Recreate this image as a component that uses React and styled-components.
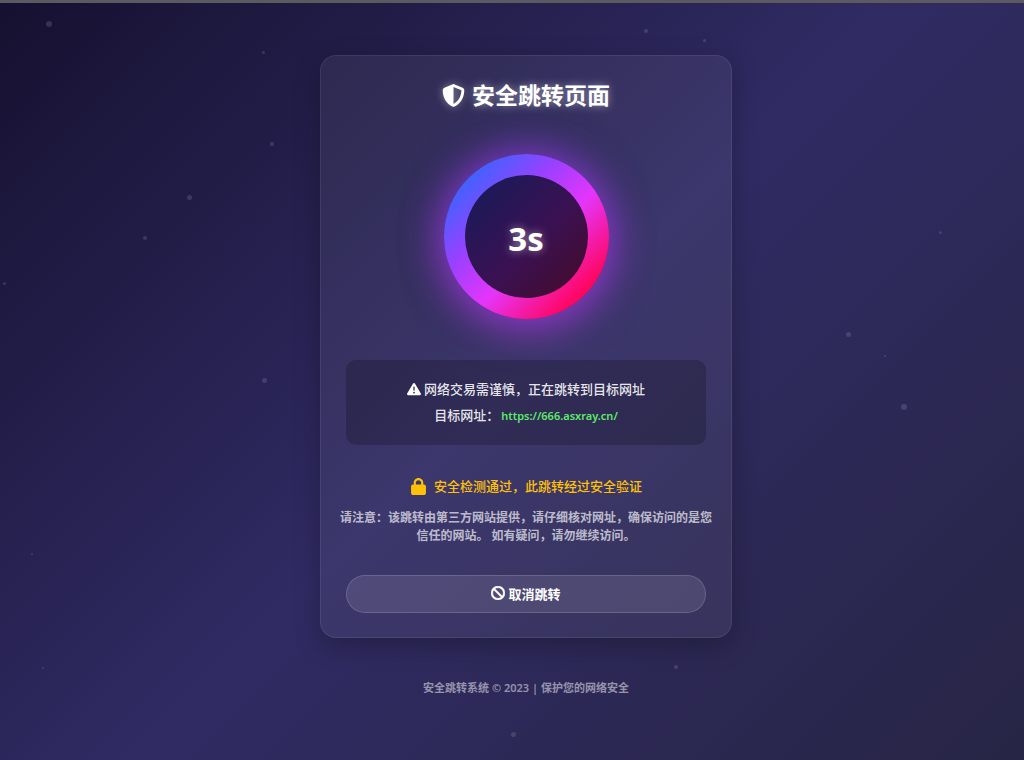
import React, {useState, useEffect} from 'react';
import styled, {createGlobalStyle} from 'styled-components';
import {FaShieldHalved, FaTriangleExclamation, FaLock, FaBan} from 'react-icons/fa6';

const GlobalStyle = createGlobalStyle`
    * {
        box-sizing: border-box;
    }
    body {
        margin: 0;
        color: #fff;
        font-family: "Noto Sans", "Noto Sans CJK SC", sans-serif;
        font-size: 13px;
    }
    h1, p {
        margin: 0;
    }
`

const Page = styled.div`
    position: relative;
    min-height: 100vh;
    padding: 52px 0 52px 28px;
    overflow: hidden;
    display: flex;
    flex-direction: column;
    align-items: center;
    border-top: 3px solid #5a5a60;
    background: linear-gradient(135deg, #161130 0%, #302b63 50%, #272545 100%);
`

const Particle = styled.span`
    position: absolute;
    left: ${({$x}) => $x}%;
    top: ${({$y}) => $y}%;
    width: ${({$size}) => $size}px;
    height: ${({$size}) => $size}px;
    border-radius: 50%;
    background: rgba(255, 255, 255, 0.13);
`

const Card = styled.main`
    position: relative;
    width: 100%;
    max-width: 412px;
    padding: 24px 16px;
    border: 1px solid rgba(255, 255, 255, 0.08);
    border-radius: 16px;
    background: rgba(255, 255, 255, 0.06);
    box-shadow: 0 8px 26px rgba(0, 0, 0, 0.25);
    text-align: center;
`

const Title = styled.h1`
    display: flex;
    align-items: center;
    justify-content: center;
    gap: 7px;
    font-size: 23px;
    line-height: 30px;
    font-weight: 700;
    text-shadow: 0 0 8px rgba(255, 255, 255, 0.5);
    svg {
        filter: drop-shadow(0 0 4px rgba(255, 255, 255, 0.4));
    }
`

const Ring = styled.div`
    display: flex;
    width: 165px;
    height: 165px;
    margin: 44px auto 41px;
    padding: 21px;
    border-radius: 50%;
    background: linear-gradient(135deg, #4361ff 15%, #9a40ff 36%, #e535fa 57%, #ff0660 84%);
    box-shadow: 0 -4px 42px rgba(140, 60, 255, 0.5), 0 8px 42px rgba(229, 53, 250, 0.5);
`

const Counter = styled.div`
    flex: 1;
    display: flex;
    align-items: center;
    justify-content: center;
    padding-top: 3px;
    border-radius: 50%;
    background: linear-gradient(135deg, #1b1a58 10%, #3a1152 55%, #430c30 90%);
    font-size: 33px;
    font-weight: 700;
    text-shadow: 0 0 8px rgba(255, 255, 255, 0.5);
`

const Info = styled.section`
    margin: 0 9px 29px;
    padding: 16px;
    border-radius: 10px;
    background: rgba(0, 0, 0, 0.2);
    color: rgba(255, 255, 255, 0.9);
    font-weight: 500;
    line-height: 26px;
    svg {
        margin-right: 3px;
        vertical-align: -2px;
        color: #fff;
    }
`

const Target = styled.a`
    margin-left: 2px;
    color: #5eea6a;
    font-size: 11px;
    font-weight: 600;
    text-decoration: none;
`

const Passed = styled.p`
    display: flex;
    align-items: center;
    justify-content: center;
    gap: 7px;
    margin-bottom: 11px;
    color: #ffc107;
    font-weight: 500;
    line-height: 24px;
`

const Notice = styled.p`
    margin-bottom: 30px;
    color: rgba(255, 255, 255, 0.68);
    font-size: 12px;
    font-weight: 600;
    line-height: 18px;
`

const Cancel = styled.button`
    display: flex;
    align-items: center;
    justify-content: center;
    gap: 3px;
    width: calc(100% - 18px);
    height: 38px;
    margin: 0 9px;
    padding: 0 0 2px;
    border: 1px solid rgba(255, 255, 255, 0.15);
    border-radius: 19px;
    background: rgba(255, 255, 255, 0.1);
    color: #fff;
    font-family: inherit;
    font-size: 13px;
    font-weight: 700;
    cursor: pointer;
`

const Footer = styled.footer`
    margin-top: 41px;
    color: rgba(255, 255, 255, 0.5);
    font-size: 11px;
    font-weight: 600;
    line-height: 18px;
`

const particles = [
    {x: 4.5, y: 2.4, size: 6},
    {x: 25.6, y: 6.3, size: 3},
    {x: 26.4, y: 18.4, size: 4},
    {x: 18.3, y: 25.4, size: 5},
    {x: 14, y: 30.8, size: 4},
    {x: 0.3, y: 36.8, size: 3},
    {x: 25.6, y: 49.6, size: 5},
    {x: 3, y: 72.7, size: 2},
    {x: 4.1, y: 87.7, size: 2},
    {x: 49.9, y: 96.3, size: 5},
    {x: 65.8, y: 87.4, size: 4},
    {x: 62.9, y: 3.4, size: 4},
    {x: 68.7, y: 4.7, size: 3},
    {x: 91.7, y: 30.1, size: 3},
    {x: 82.6, y: 43.5, size: 5},
    {x: 86.3, y: 46.5, size: 2},
    {x: 88, y: 53, size: 6},
];

const App = () => {
    const [canceled, setCanceled] = useState(false);
    const seconds = 3;

    useEffect(() => {
        document.title = '安全跳转页面';
    }, []);

    return (
        <>
            <GlobalStyle/>
            <Page>
                {particles.map(({x, y, size}) => <Particle key={`${x}-${y}`} $x={x} $y={y} $size={size}/>)}
                <Card>
                    <Title><FaShieldHalved/>安全跳转页面</Title>
                    <Ring>
                        <Counter>{seconds}s</Counter>
                    </Ring>
                    <Info>
                        <p><FaTriangleExclamation size={14}/>网络交易需谨慎，正在跳转到目标网址</p>
                        <p>目标网址：<Target href="https://666.asxray.cn/">https://666.asxray.cn/</Target></p>
                    </Info>
                    <Passed><FaLock size={17}/>安全检测通过，此跳转经过安全验证</Passed>
                    <Notice>
                        请注意：该跳转由第三方网站提供，请仔细核对网址，确保访问的是您信任的网站。 如有疑问，请勿继续访问。
                    </Notice>
                    <Cancel type="button" disabled={canceled} onClick={() => setCanceled(true)}>
                        <FaBan size={14} strokeWidth={16}/>取消跳转
                    </Cancel>
                </Card>
                <Footer>安全跳转系统 © 2023 | 保护您的网络安全</Footer>
            </Page>
        </>
    )
}

export default App;
